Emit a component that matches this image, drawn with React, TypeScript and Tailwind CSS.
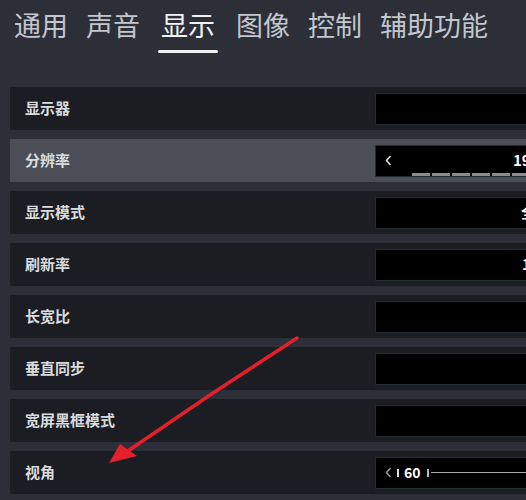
import React from 'react';

const tabs = ['通用', '声音', '显示', '图像', '控制', '辅助功能'];

type Row = {
  label: string;
  active?: boolean;
  kind?: 'plain' | 'resolution' | 'fov';
  value?: string;
  valueOffset?: number;
};

const rows: Row[] = [
  { label: '显示器' },
  { label: '分辨率', active: true, kind: 'resolution', value: '1920 × 1080' },
  { label: '显示模式', value: '全屏', valueOffset: 145 },
  { label: '刷新率', value: '144 Hz', valueOffset: 146 },
  { label: '长宽比' },
  { label: '垂直同步' },
  { label: '宽屏黑框模式' },
  { label: '视角', kind: 'fov' },
];

const Chevron = ({ className }: { className?: string }) => (
  <svg width="7" height="11" viewBox="0 0 7 11" className={`shrink-0 ${className ?? ''}`}>
    <path d="M5.5 1 L1.5 5.5 L5.5 10" fill="none" stroke="currentColor" strokeWidth="1.5" />
  </svg>
);

function ValueBox({ row }: { row: Row }) {
  if (row.kind === 'resolution') {
    return (
      <div className="relative h-[32px] w-[220px] shrink-0 bg-black border border-[#1f2c34] flex items-center">
        <Chevron className="ml-[9px] text-[#e6e6e6]" />
        <span className="ml-[121px] shrink-0 text-[15px] font-bold text-white whitespace-nowrap">{row.value}</span>
        <div className="absolute left-[36px] bottom-0 flex gap-[2px]">
          {Array.from({ length: 9 }).map((_, i) => (
            <div key={i} className="w-[18px] h-[3px] bg-[#8a8c90]" />
          ))}
        </div>
      </div>
    );
  }
  if (row.kind === 'fov') {
    return (
      <div className="h-[32px] w-[220px] shrink-0 bg-black border border-[#1f2c34] flex items-center">
        <Chevron className="ml-[9px] text-[#9a9a9a]" />
        <div className="ml-[5px] w-[2px] h-[8px] bg-[#e0e0e0]" />
        <span className="ml-[5px] text-[14px] font-bold text-white">60</span>
        <div className="ml-[6px] w-[2px] h-[8px] bg-[#bbbbbb]" />
        <div className="ml-[2px] flex-1 h-[1px] bg-[#a8a8a8]" />
      </div>
    );
  }
  return (
    <div className="h-[32px] w-[220px] shrink-0 bg-black border border-[#1f2c34] flex items-center">
      {row.value && (
        <span
          className="shrink-0 text-[15px] font-bold text-white whitespace-nowrap"
          style={{ marginLeft: row.valueOffset }}
        >
          {row.value}
        </span>
      )}
    </div>
  );
}

export default function App() {
  return (
    <div
      className="relative w-[526px] h-[500px] overflow-hidden bg-[#2c2e38]"
      style={{ fontFamily: '"Noto Sans CJK SC", "Noto Sans", sans-serif' }}
    >
      {/* tabs */}
      <div className="flex gap-[18px] pl-[14px] pt-[5px] h-[87px]">
        {tabs.map((t) => {
          const active = t === '显示';
          return (
            <div key={t} className="flex flex-col items-center">
              <span
                className={`text-[27px] leading-[40px] whitespace-nowrap ${
                  active ? 'text-[#f2f2f2]' : 'text-[#c3c6cd]'
                }`}
              >
                {t}
              </span>
              {active && <div className="mt-[5px] w-[60px] h-[3px] bg-[#f0f0f0] rounded-full" />}
            </div>
          );
        })}
      </div>

      {/* settings list */}
      <div className="flex flex-col gap-[9px] pl-[10px] w-[640px]">
        {rows.map((r) => (
          <div
            key={r.label}
            className={`flex items-center h-[43px] ${r.active ? 'bg-[#4b4e57]' : 'bg-[#1b1d23]'}`}
          >
            <span className="w-[365px] shrink-0 pl-[15px] text-[15px] font-bold text-[#dadbdd] whitespace-nowrap">
              {r.label}
            </span>
            <ValueBox row={r} />
          </div>
        ))}
      </div>

      {/* red annotation arrow */}
      <svg className="absolute left-0 top-0 pointer-events-none" width="526" height="500">
        <path d="M297 338 L210 395 L122 455" fill="none" stroke="#e3202b" strokeWidth="3.5" strokeLinecap="round" />
        <polygon points="109,463 120,444 137,456" fill="#e3202b" />
      </svg>
    </div>
  );
}
